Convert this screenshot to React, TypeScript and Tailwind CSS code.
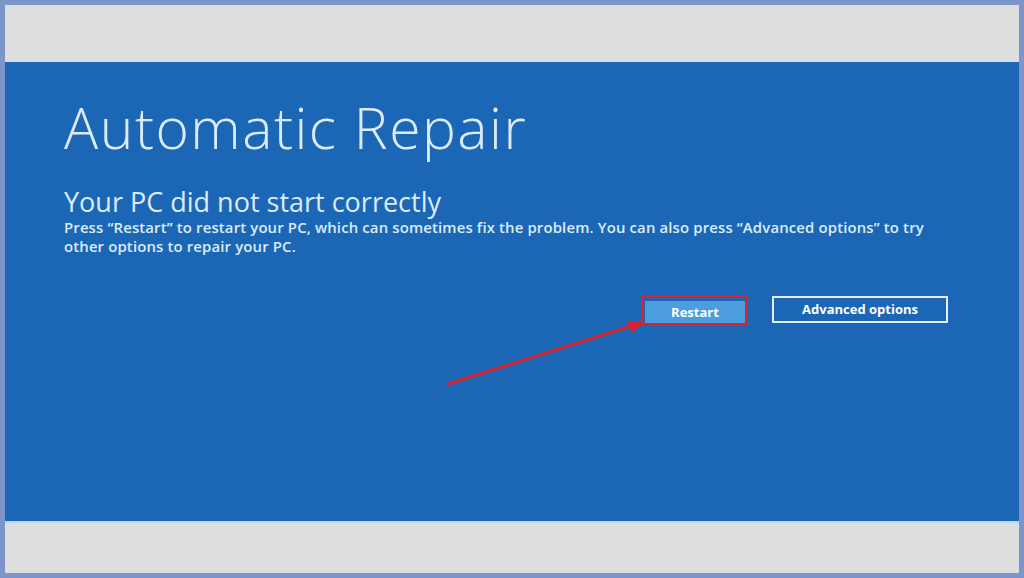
export default function App() {
  return (
    <div className="w-[1024px] h-[578px] bg-[#7d95cb] p-[5px] overflow-hidden relative font-['Open_Sans',sans-serif]">
      <div className="h-full w-full bg-[#dcdfde] flex flex-col">
        <div className="h-[57px] shrink-0" />
        <div className="h-[459px] shrink-0 bg-[#1b67b5] relative px-[59px] pt-[35px] text-[#dcebfb]">
          <h1 className="text-[57px] leading-[60px] font-light tracking-[1.5px]">Automatic Repair</h1>
          <h2 className="mt-[29px] text-[27px] leading-[32px] font-normal">Your PC did not start correctly</h2>
          <p className="text-[14.9px] leading-[19px] font-semibold tracking-[0.15px] max-w-[885px]">
            Press “Restart” to restart your PC, which can sometimes fix the problem. You can also press “Advanced options” to try other options to repair your PC.
          </p>
          <div className="mt-[40px] flex justify-end gap-[24px] pr-[12px]">
            <div className="border-2 border-[#d8222c] p-[1px]">
              <button className="w-[100px] h-[22px] bg-[#4b9de0] text-white text-[13px] leading-[22px] font-bold">Restart</button>
            </div>
            <button className="w-[176px] h-[27px] border-2 border-[#e4eefa] text-white text-[13px] font-bold">Advanced options</button>
          </div>
          <svg className="absolute left-[436px] top-[258px]" width="210" height="70" viewBox="0 0 210 70">
            <line x1="7" y1="64" x2="190" y2="6" stroke="#d6222e" strokeWidth="3" strokeLinecap="round" />
            <polygon points="203,2 186,1 191,13" fill="#d6222e" />
          </svg>
        </div>
        <div className="h-[2px] bg-[#c4d6ee]" />
        <div className="flex-1" />
      </div>
    </div>
  );
}
